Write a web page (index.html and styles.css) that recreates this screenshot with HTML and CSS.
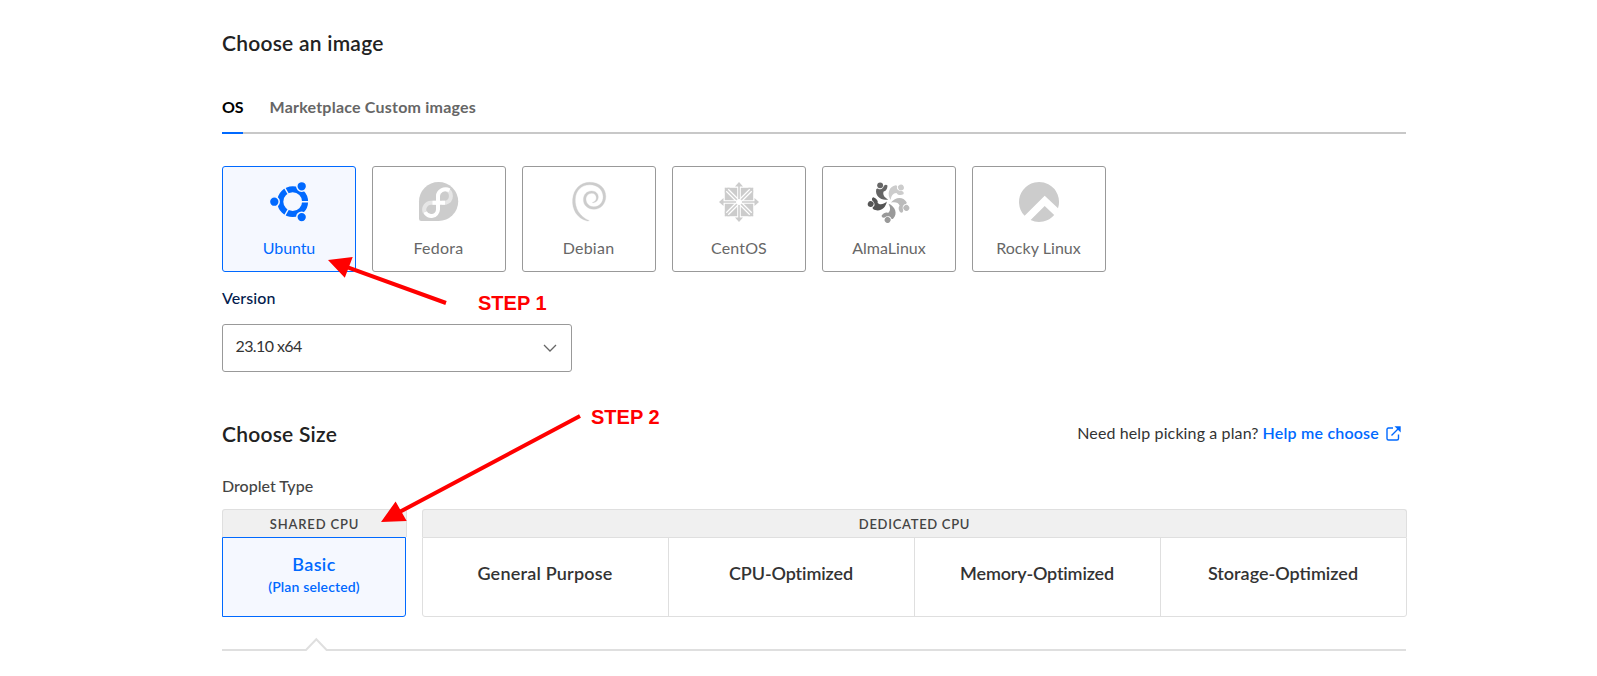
FILE: index.html
```html
<!DOCTYPE html>
<html lang="en">
<head>
<meta charset="utf-8">
<title>Create Droplets</title>
<link rel="stylesheet" href="styles.css">
</head>
<body>
<main class="page">
  <h2 class="heading heading-image"><span class="t-image">Choose an image</span></h2>
  <nav class="tabs">
    <a class="tab tab-active">OS</a>
    <a class="tab tab-rest">Marketplace Custom images</a>
  </nav>
  <section class="cards">
    <div class="card selected">
      <svg class="logo" viewBox="-20.7 -19.7 40 40">
        <circle cx="3" r="12.4" fill="none" stroke="#0069ff" stroke-width="6"/>
        <path d="M3 0H20M3 0L-6 -15.6M3 0L-6 15.6" stroke="#f5f8ff" stroke-width="1.4"/>
        <g fill="#0069ff" stroke="#f5f8ff" stroke-width="1.5"><circle cx="-15.4" cy="0" r="4.9"/><circle cx="12" cy="-15.4" r="4.9"/><circle cx="12" cy="15.4" r="4.9"/></g>
      </svg>
      <span class="t-ubuntu">Ubuntu</span>
    </div>
    <div class="card">
      <svg class="logo" viewBox="0 0 40 40">
        <path d="M0 19.5A19.6 19.5 0 1 1 19.6 39H2.2Q0 39 0 36.8Z" fill="#ccc"/>
        <g fill="none" stroke-width="4"><path d="M27 7.3A7 7 0 0 1 26.5 20.8H23M17 20.8H12A7 7 0 0 0 5.5 30" stroke="#e6e6e6"/><path d="M30.5 8.2C25 5.5 19 9 19 14V27.5A6.8 6.8 0 0 1 6 30M13.5 20.8H26" stroke="#fff"/></g>
      </svg>
      <span class="t-fedora">Fedora</span>
    </div>
    <div class="card">
      <svg class="logo" viewBox="59.2 27 40 40">
        <path d="M77.5 66C67 63.5 62 54 62.8 44.5C63.7 34 70.5 27.3 80 27.3C89.5 27.3 96 33 96 41.5C96 49 90.5 54.5 84 54.3C77.5 54.2 73.5 49.8 73.6 44.5C73.7 39.5 77 36 81.8 36C86 36 88.7 39 88.5 42.3C88.3 46 85.5 48 82.5 47.6C85.2 46.8 86.6 45 86.5 42.7C86.4 40 84.5 38.1 81.8 38.3C78.5 38.5 76.1 41 76.2 44.3C76.3 48.5 79.6 51.8 84 51.8C89.5 51.8 93.5 47.3 93.3 41.5C93 34.7 87.5 29.7 80 29.8C71.5 29.9 66 35.7 65.5 44C65 53 69.5 61.5 79.5 65.7Z" fill="#ccc" stroke="#ccc" stroke-width=".3"/>
      </svg>
      <span class="t-debian">Debian</span>
    </div>
    <div class="card">
      <svg class="logo" viewBox="-20 -20 40 40">
        <path d="M-14.2-14.2H14.2V14.2H-14.2Z" fill="#ccc"/>
        <path d="M-14-14L14 14M14-14L-14 14" stroke="#fff" stroke-width="4"/>
        <path d="M0-16V16M-16 0H16" stroke="#fff" stroke-width="3.6"/>
        <path d="M-13-13L13 13M13-13L-13 13M0-17V17M-17 0H17" stroke="#ccc" stroke-width="1.6"/>
        <path d="M0-20L4-15.5H-4ZM0 20L4 15.5H-4ZM-20 0L-15.5-4V4ZM20 0L15.5-4V4ZM-14.2-14.2h5l-5 5zM14.2-14.2h-5l5 5zM-14.2 14.2h5l-5-5zM14.2 14.2h-5l5-5z" fill="#ccc"/>
        <circle r="3" fill="#fff"/>
      </svg>
      <span class="t-centos">CentOS</span>
    </div>
    <div class="card">
      <svg class="logo" viewBox="-21 -20.5 42 42">
        <defs><g id="figure"><circle cx="-9.3" cy="-17" r="3.1"/><path d="M-13.4-12.8C-15-5.5-8-.5-.8-2.2C-4.8-4.2-7-7.5-5.6-10.6C-3.6-10.6-1.6-13-1.6-16.8C-3-18.6-5.4-17.6-6-15.1C-7.2-13-9.5-12.6-10.6-12.9C-11.2-14-12.8-14-13.4-12.8Z"/></g></defs>
        <use href="#figure" fill="#666"/>
        <use href="#figure" fill="#ccc" transform="rotate(69)"/>
        <use href="#figure" fill="#bbb" transform="rotate(139)"/>
        <use href="#figure" fill="#999" transform="rotate(213)"/>
        <use href="#figure" fill="#555" transform="rotate(291)"/>
      </svg>
      <span class="t-alma">AlmaLinux</span>
    </div>
    <div class="card">
      <svg class="logo" viewBox="-20 -20 40 40">
        <path d="M-14.4 13.8A20 20 0 1 1 19 6.3L5.7-6.2ZM-8.4 18.1L5.7 3.9L15.2 13A20 20 0 0 1-8.4 18.1Z" fill="#ccc"/>
      </svg>
      <span class="t-rocky">Rocky Linux</span>
    </div>
  </section>
  <label class="version"><span class="t-version">Version</span></label>
  <div class="select">
    <span class="t-select">23.10 x64</span>
    <svg class="chevron" viewBox="0 0 14 8"><path d="M1 1L7 7L13 1" fill="none" stroke="#666" stroke-width="1.3"/></svg>
  </div>
  <div class="size-head">
    <h2 class="heading"><span class="t-size">Choose Size</span></h2>
    <p class="help"><span class="t-need">Need help picking a plan?</span><a class="link">Help me choose</a>
      <svg class="external" viewBox="0 0 15 15"><path d="M7 2H2.5Q1 2 1 3.5V12.5Q1 14 2.5 14H11Q12.5 14 12.5 12.5V8.5M5.5 9.5L13 2" fill="none" stroke="#0069ff" stroke-width="1.4"/><path d="M8.5 .3H14.7V6.5Z" fill="#0069ff"/></svg>
    </p>
  </div>
  <h3 class="droplet"><span class="t-droplet">Droplet Type</span></h3>
  <section class="plans">
    <div class="group shared">
      <div class="group-head"><span class="t-shared">SHARED CPU</span></div>
      <div class="basic"><span class="t-basic">Basic</span><small class="t-plan">(Plan selected)</small></div>
    </div>
    <div class="group dedicated">
      <div class="group-head"><span class="t-dedicated">DEDICATED CPU</span></div>
      <div class="options">
        <div class="option"><span class="t-general">General Purpose</span></div>
        <div class="option"><span class="t-cpu">CPU-Optimized</span></div>
        <div class="option"><span class="t-memory">Memory-Optimized</span></div>
        <div class="option"><span class="t-storage">Storage-Optimized</span></div>
      </div>
    </div>
  </section>
  <svg class="divider" viewBox="0 0 1184 14"><path d="M0 13H84L94.3 2.3L104.6 13H1184" fill="none" stroke="#dfdfdf" stroke-width="2"/></svg>
</main>
<svg class="arrows" viewBox="0 0 1597 676">
  <path d="M345 266.3L446 303M392 516L580 416" stroke="#f00" stroke-width="4"/>
  <path d="M328 260L352.7 257L344.8 277.7ZM381 522L395.6 501.5L406.7 521Z" fill="#f00"/>
</svg>
<span class="step step-one">STEP 1</span>
<span class="step step-two">STEP 2</span>
</body>
</html>
```
FILE: styles.css
```css
* { box-sizing: border-box; }
body {
  margin: 0;
  height: 676px;
  overflow: hidden;
  position: relative;
  background: #fff;
  color: #333;
  font: 16px/20px Lato, "Open Sans", sans-serif;
}
.page { width: 1185px; margin-left: 222px; padding-top: 31px; }
.page span, .tab, .link { white-space: nowrap; }
h2, h3, p { margin: 0; }
.heading { font-size: 21px; line-height: 24px; font-weight: 600; color: #222; letter-spacing: .24px; }
.tabs { display: flex; gap: 26.5px; width: 1184px; height: 38px; margin-top: 41px; border-bottom: 2px solid #c8c8c8; }
.tab { height: 38px; line-height: 22px; font-weight: 700; color: #666; }
.tab-active { color: #000; width: 21px; border-bottom: 2px solid #0069ff; letter-spacing: -.1px; }
.tab-rest { letter-spacing: .22px; }
.cards { display: flex; gap: 16px; margin-top: 32px; }
.card { width: 134px; height: 106px; border: 1px solid #999; border-radius: 3px; display: flex; flex-direction: column; align-items: center; padding-top: 15px; gap: 16px; color: #676767; }
.card.selected { border-color: #0069ff; background: #f5f8ff; color: #0069ff; }
.logo { width: 40px; height: 40px; flex: none; overflow: visible; }
.t-ubuntu { letter-spacing: -.1px; }
.t-fedora, .t-debian { letter-spacing: .25px; margin-right: 1px; }
.t-centos { letter-spacing: .15px; }
.t-rocky { letter-spacing: .05px; margin-right: 1px; }
.version { display: block; margin-top: 16px; font-weight: 500; color: #031b4e; letter-spacing: .1px; }
.select { display: flex; align-items: center; justify-content: space-between; width: 350px; height: 48px; margin-top: 16px; padding: 0 14px 4px 12.5px; border: 1px solid #999; border-radius: 3px; }
.t-select { letter-spacing: -.6px; }
.chevron { width: 14px; height: 8px; margin-top: 4px; }
.size-head { display: flex; justify-content: space-between; align-items: center; margin-top: 49px; height: 24px; }
.t-size { position: relative; top: 1px; }
.help { display: flex; align-items: center; padding-right: 6px; }
.t-need { letter-spacing: .12px; }
.link { color: #0069ff; font-weight: 600; margin: 0 7px 0 4px; letter-spacing: .2px; }
.external { width: 15px; height: 15px; }
.droplet { margin-top: 31px; font-size: 16px; line-height: 20px; font-weight: 500; color: #444; }
.plans { display: flex; gap: 15px; margin-top: 13px; }
.group-head { height: 28px; display: flex; align-items: center; justify-content: center; background: #f0f0f0; border: 1px solid #dfdfdf; border-bottom: 0; border-radius: 3px 3px 0 0; font-size: 13px; font-weight: 600; color: #444; }
.t-shared { letter-spacing: .85px; }
.t-dedicated { letter-spacing: .7px; }
.shared { width: 185px; }
.dedicated { width: 985px; }
.basic { width: 184px; height: 80px; display: flex; flex-direction: column; align-items: center; padding-top: 16px; border: 1px solid #0069ff; background: #f5f8ff; color: #0069ff; border-radius: 0 0 3px 0; font-size: 18px; line-height: 20px; font-weight: 600; }
.t-basic { letter-spacing: .35px; }
.basic small { font-size: 14px; margin-top: 3px; letter-spacing: .15px; }
.options { display: grid; grid-template-columns: 245px repeat(3, 246px); height: 80px; border: 1px solid #dfdfdf; border-radius: 0 0 3px 3px; }
.option { display: flex; align-items: center; justify-content: center; padding: 0 1px 8px 0; font-size: 18px; font-weight: 600; color: #333; }
.option + .option { border-left: 1px solid #dfdfdf; }
.t-general { letter-spacing: .2px; }
.t-cpu { letter-spacing: -.12px; }
.t-memory { letter-spacing: -.18px; }
.divider { display: block; width: 1184px; height: 14px; margin-top: 20px; }
.arrows { position: absolute; left: 0; top: 0; width: 1597px; height: 676px; }
.step { position: absolute; font: bold 20px/24px "Liberation Sans", Arial, sans-serif; color: #f00; white-space: nowrap; }
.step-one { left: 478px; top: 291px; }
.step-two { left: 591px; top: 405px; }
```
